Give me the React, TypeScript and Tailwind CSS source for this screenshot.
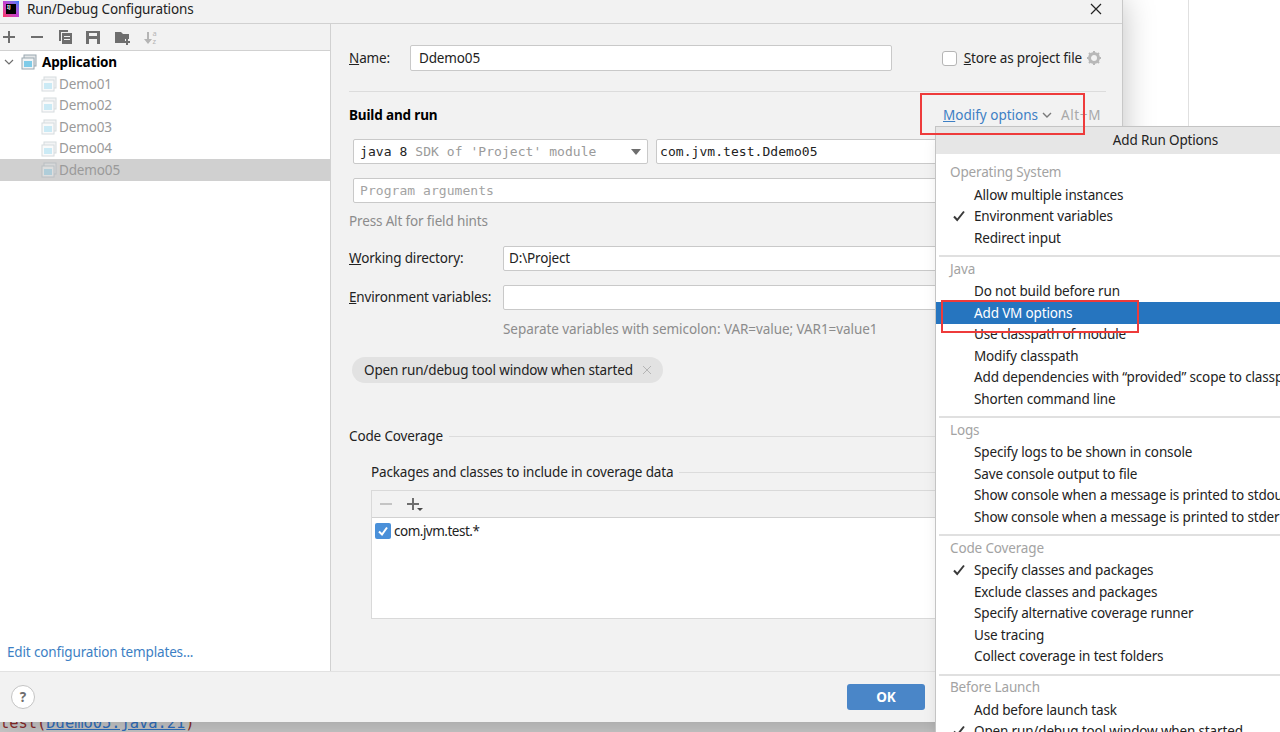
import type { ReactNode } from "react";

const sans = { fontFamily: '"Noto Sans", "Open Sans", sans-serif' };

const configs = ["Demo01", "Demo02", "Demo03", "Demo04", "Ddemo05"];

const sections = [
  { title: "Operating System", rows: [["Allow multiple instances"], ["Environment variables", "check"], ["Redirect input"]] },
  {
    title: "Java",
    rows: [
      ["Do not build before run"],
      ["Add VM options", "active"],
      ["Use classpath of module"],
      ["Modify classpath"],
      ["Add dependencies with “provided” scope to classpath"],
      ["Shorten command line"],
    ],
  },
  {
    title: "Logs",
    rows: [
      ["Specify logs to be shown in console"],
      ["Save console output to file"],
      ["Show console when a message is printed to stdout"],
      ["Show console when a message is printed to stderr"],
    ],
  },
  {
    title: "Code Coverage",
    rows: [
      ["Specify classes and packages", "check"],
      ["Exclude classes and packages"],
      ["Specify alternative coverage runner"],
      ["Use tracing"],
      ["Collect coverage in test folders"],
    ],
  },
  { title: "Before Launch", rows: [["Add before launch task"], ["Open run/debug tool window when started", "check"]] },
];

function AppIcon({ faded }: { faded?: boolean }) {
  return (
    <svg width="16" height="16" viewBox="0 0 16 16" className={faded ? "opacity-40 shrink-0" : "shrink-0"}>
      <rect x="3" y="1" width="12" height="11" fill="#e3e6e8" stroke="#9aa7b0" strokeWidth="1" />
      <rect x="1" y="4" width="12" height="11" fill="#f2f4f5" stroke="#9aa7b0" strokeWidth="1" />
      <rect x="3" y="7" width="8" height="6" fill="#7fcbe8" />
    </svg>
  );
}

function Field({ children, className }: { children?: ReactNode; className: string }) {
  return (
    <div className={`bg-white border border-[#c9c9c9] rounded-[2px] flex items-center text-[#222] ${className}`}>
      {children}
    </div>
  );
}

function Toolbar() {
  return (
    <div className="h-[27px] flex items-center bg-[#f2f2f2] border-b border-[#d1d1d1] pl-[1px] gap-[12px] text-[#6e6e6e]">
      <svg width="16" height="16" viewBox="0 0 16 16"><path d="M7 2h2v5h5v2H9v5H7V9H2V7h5z" fill="currentColor" /></svg>
      <svg width="16" height="16" viewBox="0 0 16 16"><path d="M2 7h12v2H2z" fill="currentColor" /></svg>
      <svg width="16" height="16" viewBox="0 0 16 16">
        <path d="M2 1h9v2H4v9H2z" fill="currentColor" />
        <path d="M5 4h10v11H5z" fill="currentColor" />
        <path d="M7 7h6v1H7zM7 10h6v1H7z" fill="#f2f2f2" />
      </svg>
      <svg width="16" height="16" viewBox="0 0 16 16">
        <path d="M1 2h14v13H1z" fill="currentColor" />
        <path d="M4 4h8v3H4zM4 10h8v5H4z" fill="#f2f2f2" />
      </svg>
      <svg width="16" height="16" viewBox="0 0 16 16" className="ml-[1px]">
        <path d="M1 3h6l2 2h6v5h-4v4H1z" fill="currentColor" />
        <path d="M12 10h2v2h2v2h-2v2h-2v-2h-2v-2h2z" fill="#6e6e6e" />
      </svg>
      <svg width="16" height="16" viewBox="0 0 16 16" className="text-[#b5b5b5] ml-[1px]">
        <path d="M4 3h2v7h3l-4 5-4-5h3z" fill="currentColor" />
        <text x="9.5" y="7" fontSize="7.5" fill="currentColor" style={sans}>a</text>
        <text x="9.5" y="14.5" fontSize="7.5" fill="currentColor" style={sans}>z</text>
      </svg>
    </div>
  );
}

function Sidebar() {
  return (
    <div className="w-[331px] shrink-0 flex flex-col bg-white border-r border-[#d1d1d1]">
      <Toolbar />
      <div className="flex-1 pt-[0.4px]">
        <div className="h-[21.6px] flex items-center pl-[4px] font-bold text-black">
          <svg width="10" height="10" viewBox="0 0 10 10" className="mr-[7px]">
            <path d="M1 3l4 4 4-4" fill="none" stroke="#6e6e6e" strokeWidth="1.2" />
          </svg>
          <AppIcon />
          <span className="ml-[5px]">Application</span>
        </div>
        {configs.map((name) => (
          <div
            key={name}
            className={`h-[21.6px] flex items-center pl-[41px] text-[#9a9a9a] ${name === "Ddemo05" ? "bg-[#d0d0d0]" : ""}`}
          >
            <AppIcon faded />
            <span className="ml-[2px]">{name}</span>
          </div>
        ))}
      </div>
      <div className="h-[29px] pl-[7px] text-[#3d7fc4]">Edit configuration templates...</div>
    </div>
  );
}

function Form() {
  return (
    <div className="flex-1 min-w-0 bg-[#f2f2f2] pl-[18px] pr-[16px] pt-[21px] text-[#222]">
      <div className="flex items-center">
        <label className="w-[61px]"><span className="underline">N</span>ame:</label>
        <Field className="w-[482px] h-[26px] pl-[8px]">Ddemo05</Field>
        <div className="ml-auto mr-[4px] flex items-center">
          <span className="w-[15px] h-[15px] bg-white border border-[#b5b5b5] rounded-[3px]" />
          <span className="ml-[7px]"><span className="underline">S</span>tore as project file</span>
          <svg width="16" height="16" viewBox="0 0 16 16" className="ml-[4px]">
            <circle cx="8" cy="8" r="4.5" fill="none" stroke="#b8b8b8" strokeWidth="3" />
            <path d="M8 1v3M8 12v3M1 8h3M12 8h3M3 3l2 2M11 11l2 2M13 3l-2 2M5 11l-2 2" stroke="#b8b8b8" strokeWidth="2" />
          </svg>
        </div>
      </div>
      <div className="h-px bg-[#dcdcdc] mt-[20px]" />
      <div className="flex items-center h-[22px] mt-[12px]">
        <span className="font-bold text-black">Build and run</span>
        <span className="ml-auto text-[#3d7fc4] tracking-normal"><span className="underline">M</span>odify options</span>
        <svg width="10" height="10" viewBox="0 0 10 10" className="ml-[4px]">
          <path d="M1 3l4 4 4-4" fill="none" stroke="#7a7a7a" strokeWidth="1.4" />
        </svg>
        <span className="ml-[9px] mr-[5px] text-[#a8a8a8] tracking-[0.6px]">Alt+M</span>
      </div>
      <div className="flex mt-[13px] ml-[4px] gap-[8px] font-['DejaVu_Sans_Mono',monospace] text-[13px] tracking-[0.05px]">
        <Field className="w-[295px] h-[25px] pl-[6px] pr-[6px]">
          <span>java 8</span>
          <span className="ml-[8px] text-[#9a9a9a]">SDK of 'Project' module</span>
          <svg width="10" height="6" viewBox="0 0 10 6" className="ml-auto">
            <path d="M0 0h10L5 6z" fill="#6e6e6e" />
          </svg>
        </Field>
        <Field className="flex-1 h-[25px] pl-[3px]">com.jvm.test.Ddemo05</Field>
      </div>
      <Field className="h-[25px] mt-[14px] ml-[4px] pl-[6px] font-['DejaVu_Sans_Mono',monospace] text-[13px] tracking-[0.05px]">
        <span className="text-[#a3a3a3]">Program arguments</span>
      </Field>
      <div className="h-[20px] mt-[8px] flex items-center text-[#8c8c8c]">Press Alt for field hints</div>
      <div className="flex items-center mt-[15px]">
        <label className="w-[154px]"><span className="underline">W</span>orking directory:</label>
        <Field className="flex-1 h-[25px] pl-[5px]">D:\Project</Field>
      </div>
      <div className="flex items-center mt-[14px]">
        <label className="w-[154px]"><span className="underline">E</span>nvironment variables:</label>
        <Field className="flex-1 h-[25px]" />
      </div>
      <div className="h-[20px] mt-[9px] ml-[154px] flex items-center text-[#8c8c8c] tracking-[-0.06px]">
        Separate variables with semicolon: VAR=value; VAR1=value1
      </div>
      <div className="mt-[18px] ml-[3px] w-[311px] h-[26px] rounded-full bg-[#e2e2e2] flex items-center pl-[12px] whitespace-nowrap">
        Open run/debug tool window when started
        <svg width="10" height="10" viewBox="0 0 10 10" className="ml-[9px]">
          <path d="M1 1l8 8M9 1l-8 8" stroke="#b5b5b5" strokeWidth="1" />
        </svg>
      </div>
      <div className="flex items-center h-[20px] mt-[43px]">
        <span>Code Coverage</span>
        <div className="flex-1 h-px bg-[#dcdcdc] ml-[6px]" />
      </div>
      <div className="flex items-center h-[20px] mt-[16px] ml-[22px]">
        <span>Packages and classes to include in coverage data</span>
        <div className="flex-1 h-px bg-[#dcdcdc] ml-[6px]" />
      </div>
      <div className="mt-[8px] ml-[22px] h-[129px] bg-white border border-[#d9d9d9]">
        <div className="h-[27px] bg-[#f2f2f2] border-b border-[#d1d1d1] flex items-center pl-[6px] gap-[12px]">
          <svg width="16" height="16" viewBox="0 0 16 16"><path d="M2 7h12v2H2z" fill="#c4c4c4" /></svg>
          <svg width="18" height="16" viewBox="0 0 18 16">
            <path d="M6 2h2v5h5v2H8v5H6V9H1V7h5z" fill="#6e6e6e" />
            <path d="M11 12h6l-3 3z" fill="#4a4a4a" />
          </svg>
        </div>
        <div className="flex items-center h-[26px] pl-[3px]">
          <span className="w-[16px] h-[16px] rounded-[2px] bg-[#4a90d9] flex items-center justify-center">
            <svg width="12" height="12" viewBox="0 0 12 12">
              <path d="M2 6.5l3 3 5-7" fill="none" stroke="#fff" strokeWidth="2" />
            </svg>
          </span>
          <span className="ml-[3px] tracking-[-0.5px]">com.jvm.test.*</span>
        </div>
      </div>
    </div>
  );
}

function RunOptions() {
  return (
    <div className="absolute left-[935px] top-[126px] w-[460px] bg-white border-l border-t border-[#c4c4c4] text-[#222] z-20 shadow-lg">
      <div className="h-[27px] bg-[#e6e6e6] flex items-center justify-center">Add Run Options</div>
      <div className="pt-[7.5px]">
        {sections.map((section, i) => (
          <div key={section.title}>
            {i > 0 && <div className="h-[2px] bg-[#e0e0e0] ml-[3px] mt-[6.5px] mb-[1px]" />}
            <div className="h-[22.5px] pb-[1px] flex items-center pl-[14px] text-[#a3a3a3]">{section.title}</div>
            {section.rows.map(([label, flag]) => (
              <div
                key={label}
                className={`h-[21.5px] flex items-center pl-[16px] whitespace-nowrap ${flag === "active" ? "bg-[#2675bf] text-white" : ""}`}
              >
                <span className="w-[22px] shrink-0">
                  {flag === "check" && (
                    <svg width="14" height="14" viewBox="0 0 14 14">
                      <path d="M2 7.5l3.2 3.5L12 2.5" fill="none" stroke="#3a3a3a" strokeWidth="2" />
                    </svg>
                  )}
                </span>
                {label}
              </div>
            ))}
          </div>
        ))}
      </div>
    </div>
  );
}

export default function App() {
  return (
    <div className="relative w-[1280px] h-[732px] overflow-hidden bg-white text-[13.5px] tracking-[-0.15px]" style={sans}>
      <div className="flex h-[722px]">
        <div className="relative z-10 w-[1123px] h-[722px] flex flex-col bg-[#f2f2f2] border-r border-[#c8c8c8] shadow-[0_0_30px_rgba(0,0,0,0.25)]">
          <div className="h-[24px] shrink-0 flex items-start pt-[1px] pl-[3px] border-b border-[#d1d1d1] text-[#222]">
            <div className="w-[16px] h-[16px] bg-gradient-to-tr from-[#fe315d] via-[#c13fd0] to-[#087cfa] p-[3px]">
              <div className="w-full h-full bg-black text-white text-[5px] leading-[6px] font-bold pl-[1px] tracking-normal">IJ</div>
            </div>
            <span className="ml-[8px] leading-[17px]">Run/Debug Configurations</span>
            <svg width="12" height="12" viewBox="0 0 12 12" className="ml-auto mr-[20px] mt-[2px]">
              <path d="M1 1l10 10M11 1L1 11" stroke="#222" strokeWidth="1.2" />
            </svg>
          </div>
          <div className="flex flex-1 min-h-0">
            <Sidebar />
            <Form />
          </div>
          <div className="h-[51px] shrink-0 flex items-center bg-[#f2f2f2] border-t border-[#e2e2e2] pl-[11px] pr-[197px]">
            <span className="w-[24px] h-[24px] rounded-full bg-white border border-[#c4c4c4] flex items-center justify-center font-bold text-[#6e6e6e]">?</span>
            <button className="ml-auto w-[78px] h-[26px] rounded-[3px] bg-[#4a86c8] text-white font-bold">OK</button>
          </div>
        </div>
        <div className="flex-1 pl-[65px]">
          <div className="w-px h-full bg-[#e0e0e0]" />
        </div>
      </div>
      <div className="h-[10px] bg-[#c9c9c9] overflow-hidden">
        <div className="-mt-[8px] font-['DejaVu_Sans_Mono',monospace] text-[15.4px] leading-[18px] tracking-normal text-[#8a2b2b]">
          test(<span className="text-[#2f6fbf] underline">Ddemo05.java:21</span>)
        </div>
      </div>
      <RunOptions />
      <div className="absolute left-[920px] top-[93px] w-[165px] h-[42px] border-2 border-[#ee3b3b] z-30" />
      <div className="absolute left-[941px] top-[300px] w-[198px] h-[33px] border-2 border-[#ee3b3b] z-30" />
    </div>
  );
}
